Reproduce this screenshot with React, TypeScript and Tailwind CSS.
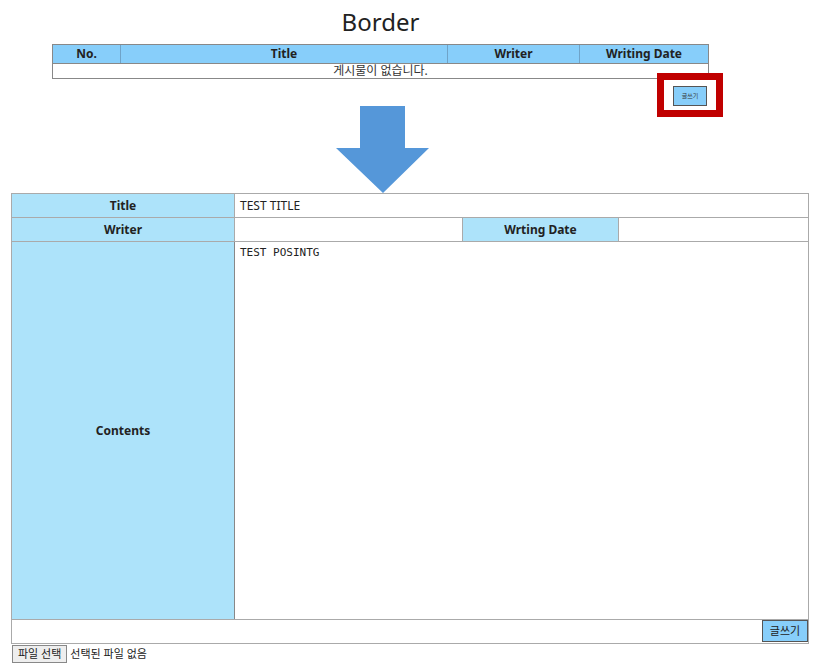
import React from 'react';

const font = { fontFamily: '"Noto Sans", "Noto Sans CJK KR", sans-serif' };

function BoardList() {
    return (
        <div className="ml-[52px] w-[657px]">
            <h1 className="h-[44px] pt-[6px] text-center text-[24px] leading-[32px] text-[#222]">Border</h1>
            <div className="border border-[#888]">
                <div className="grid h-[18px] grid-cols-[67px_327px_132px_1fr] bg-[#87cefa] text-[12px] font-bold leading-[17px] text-[#222]">
                    <div className="text-center">No.</div>
                    <div className="border-l border-[#6fa3c8] text-center">Title</div>
                    <div className="border-l border-[#6fa3c8] text-center">Writer</div>
                    <div className="border-l border-[#6fa3c8] text-center">Writing Date</div>
                </div>
                <div className="h-[15px] border-t border-[#888] text-center text-[12px] leading-[14px] text-[#333]">
                    게시물이 없습니다.
                </div>
            </div>
        </div>
    );
}

function Highlight() {
    return (
        <div className="ml-[657px] -mt-[6px] flex h-[44px] w-[66px] items-center justify-center border-[7px] border-[#c00000] bg-white">
            <button className="mt-[2px] h-[20px] w-[34px] border border-[#555] bg-[#87cefa] text-[6px] leading-none text-[#333]">
                글쓰기
            </button>
        </div>
    );
}

function Arrow() {
    return (
        <div className="-mt-[11px] flex justify-center">
            <svg width="93" height="87" viewBox="0 0 93 87" className="ml-[-54px]">
                <polygon points="24,0 69,0 69,42 93,42 47,87 0,42 24,42" fill="#5597d9" />
            </svg>
        </div>
    );
}

function WriteForm() {
    const label = 'flex items-center justify-center bg-[#ade3fa] text-[12px] font-bold text-[#222]';
    return (
        <div className="ml-[11px] w-[798px] border border-[#aaa]">
            <div className="grid h-[24px] grid-cols-[222px_1fr] border-b border-[#aaa]">
                <div className={label}>Title</div>
                <div className="border-l border-[#aaa] pl-[5px] text-[12px] leading-[23px] text-[#222]">TEST TITLE</div>
            </div>
            <div className="grid h-[24px] grid-cols-[222px_228px_156px_1fr] border-b border-[#aaa]">
                <div className={label}>Writer</div>
                <div className="border-l border-[#aaa]"></div>
                <div className={`${label} border-l border-[#aaa]`}>Wrting Date</div>
                <div className="border-l border-[#aaa]"></div>
            </div>
            <div className="grid h-[378px] grid-cols-[222px_1fr] border-b border-[#aaa]">
                <div className={label}>Contents</div>
                <div
                    className="border-l border-[#888] pl-[5px] pt-[4px] text-[11px] leading-[14px] text-[#222]"
                    style={{ fontFamily: '"DejaVu Sans Mono", "Liberation Mono", monospace' }}
                >
                    TEST POSINTG
                </div>
            </div>
            <div className="flex h-[23px] justify-end">
                <button className="h-[22px] w-[46px] border border-[#555] bg-[#87cefa] text-[11px] text-[#222]">글쓰기</button>
            </div>
        </div>
    );
}

export default function App() {
    return (
        <div className="h-[668px] w-[819px] bg-white" style={font}>
            <BoardList />
            <Highlight />
            <Arrow />
            <WriteForm />
            <div className="ml-[12px] mt-[1px] flex items-center gap-[3px] text-[11px] leading-[16px] text-[#222]">
                <span className="border border-[#888] bg-[#eee] px-[5px]">파일 선택</span>
                <span>선택된 파일 없음</span>
            </div>
        </div>
    );
}
